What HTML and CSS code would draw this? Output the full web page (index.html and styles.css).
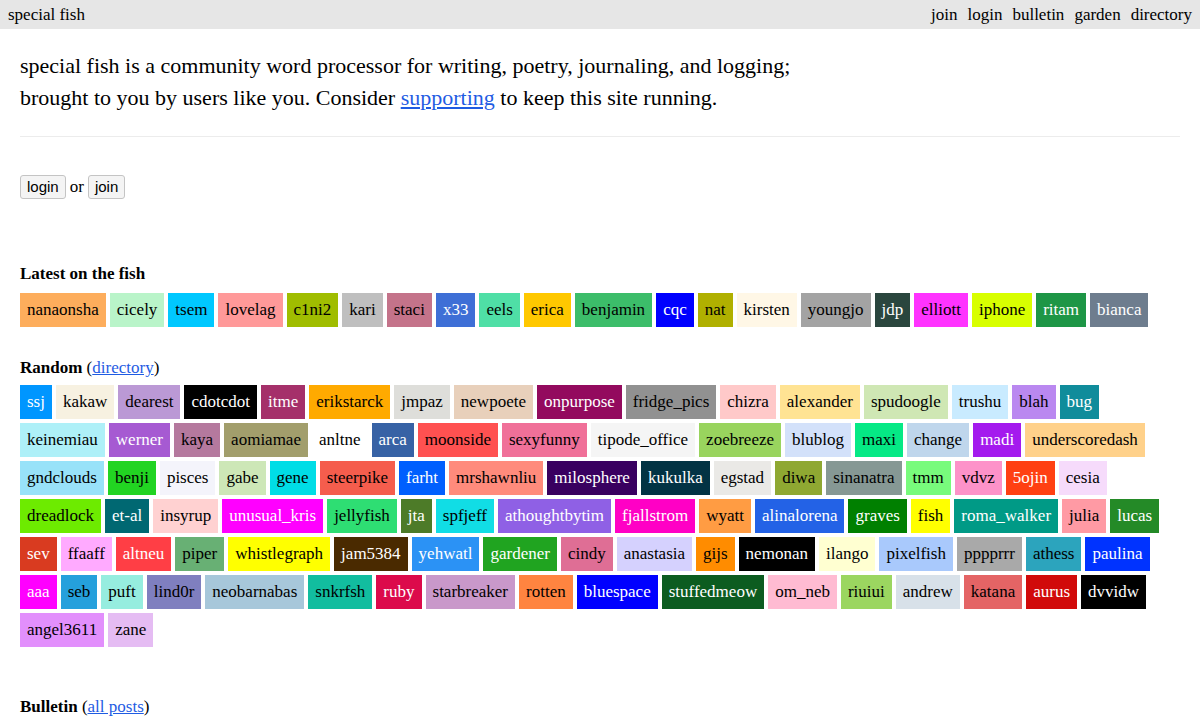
FILE: index.html
```html
<!DOCTYPE html>
<html>
<head>
<meta charset="utf-8">
<title>special fish</title>
<link rel="stylesheet" href="styles.css">
</head>
<body>
<header class="topbar">
  <a class="brand" href="#">special fish</a>
  <nav class="nav">
    <a href="#">join</a>
    <a href="#">login</a>
    <a href="#">bulletin</a>
    <a href="#">garden</a>
    <a href="#">directory</a>
  </nav>
</header>
<main class="main">
  <p class="intro">special fish is a community word processor for writing, poetry, journaling, and logging;<br>brought to you by users like you. Consider <a class="link" href="#">supporting</a> to keep this site running.</p>
  <hr class="rule">
  <div class="auth">
    <button class="btn">login</button> <span>or</span> <button class="btn">join</button>
  </div>

  <section class="section latest">
    <h2 class="heading">Latest on the fish</h2>
    <div class="tags">
      <a class="tag" style="background:#fdad5c">nanaonsha</a>
      <a class="tag" style="background:#b9f4c9">cicely</a>
      <a class="tag" style="background:#00c8ff">tsem</a>
      <a class="tag" style="background:#ff9999">lovelag</a>
      <a class="tag" style="background:#a0bd00">c1ni2</a>
      <a class="tag" style="background:#bfbfbf">kari</a>
      <a class="tag" style="background:#c4738a">staci</a>
      <a class="tag light" style="background:#3e6fd6">x33</a>
      <a class="tag" style="background:#4fdfa6">eels</a>
      <a class="tag" style="background:#ffc800">erica</a>
      <a class="tag" style="background:#3cbd6a">benjamin</a>
      <a class="tag light" style="background:#0000ff">cqc</a>
      <a class="tag" style="background:#b0b000">nat</a>
      <a class="tag" style="background:#fff7e6">kirsten</a>
      <a class="tag" style="background:#a3a3a3">youngjo</a>
      <a class="tag light" style="background:#2a463e">jdp</a>
      <a class="tag" style="background:#ff33ff">elliott</a>
      <a class="tag" style="background:#d8ff00">iphone</a>
      <a class="tag light" style="background:#1e9646">ritam</a>
      <a class="tag light" style="background:#6e7d8e">bianca</a>
    </div>
  </section>

  <section class="section random">
    <h2 class="heading">Random <span class="paren">(<a class="link" href="#">directory</a>)</span></h2>
    <div class="tags">
      <a class="tag light" style="background:#0096ff">ssj</a>
      <a class="tag" style="background:#f7f1e1">kakaw</a>
      <a class="tag" style="background:#bb99d5">dearest</a>
      <a class="tag light" style="background:#000000">cdotcdot</a>
      <a class="tag light" style="background:#a5306a">itme</a>
      <a class="tag" style="background:#ffaa00">erikstarck</a>
      <a class="tag" style="background:#dededa">jmpaz</a>
      <a class="tag" style="background:#e8d0bb">newpoete</a>
      <a class="tag light" style="background:#930a5e">onpurpose</a>
      <a class="tag" style="background:#919191">fridge_pics</a>
      <a class="tag" style="background:#ffc9c9">chizra</a>
      <a class="tag" style="background:#ffe393">alexander</a>
      <a class="tag" style="background:#cfe7b4">spudoogle</a>
      <a class="tag" style="background:#c9ebff">trushu</a>
      <a class="tag" style="background:#ba88f0">blah</a>
      <a class="tag light" style="background:#108c9b">bug</a>

      <a class="tag" style="background:#aef0f8">keinemiau</a>
      <a class="tag light" style="background:#a65ad2">werner</a>
      <a class="tag" style="background:#b5799e">kaya</a>
      <a class="tag" style="background:#a29e6c">aomiamae</a>
      <a class="tag" style="background:#ffffff">anltne</a>
      <a class="tag light" style="background:#3762a5">arca</a>
      <a class="tag" style="background:#ff5151">moonside</a>
      <a class="tag" style="background:#f07099">sexyfunny</a>
      <a class="tag" style="background:#f5f5f5">tipode_office</a>
      <a class="tag" style="background:#99d45e">zoebreeze</a>
      <a class="tag" style="background:#d3e1fa">blublog</a>
      <a class="tag" style="background:#05e985">maxi</a>
      <a class="tag" style="background:#bfd6ec">change</a>
      <a class="tag light" style="background:#a41aee">madi</a>
      <a class="tag" style="background:#ffd18a">underscoredash</a>

      <a class="tag" style="background:#98e2f9">gndclouds</a>
      <a class="tag" style="background:#22d422">benji</a>
      <a class="tag" style="background:#f4f4fb">pisces</a>
      <a class="tag" style="background:#cde7b7">gabe</a>
      <a class="tag" style="background:#00dde6">gene</a>
      <a class="tag" style="background:#f55d4d">steerpike</a>
      <a class="tag light" style="background:#005ffe">farht</a>
      <a class="tag" style="background:#ff8b7c">mrshawnliu</a>
      <a class="tag light" style="background:#390060">milosphere</a>
      <a class="tag light" style="background:#023344">kukulka</a>
      <a class="tag" style="background:#eae9e6">egstad</a>
      <a class="tag" style="background:#8fa832">diwa</a>
      <a class="tag" style="background:#869894">sinanatra</a>
      <a class="tag" style="background:#78fb7c">tmm</a>
      <a class="tag" style="background:#fd92c9">vdvz</a>
      <a class="tag light" style="background:#ff4012">5ojin</a>
      <a class="tag" style="background:#f6dbfb">cesia</a>

      <a class="tag" style="background:#6deb00">dreadlock</a>
      <a class="tag light" style="background:#006872">et-al</a>
      <a class="tag" style="background:#ffd1d1">insyrup</a>
      <a class="tag light" style="background:#ff00ff">unusual_kris</a>
      <a class="tag" style="background:#2ede73">jellyfish</a>
      <a class="tag light" style="background:#4d7b28">jta</a>
      <a class="tag" style="background:#11dde5">spfjeff</a>
      <a class="tag light" style="background:#8f60e5">athoughtbytim</a>
      <a class="tag light" style="background:#ff00c5">fjallstrom</a>
      <a class="tag" style="background:#ff9c43">wyatt</a>
      <a class="tag light" style="background:#2362e6">alinalorena</a>
      <a class="tag light" style="background:#008000">graves</a>
      <a class="tag" style="background:#ffff00">fish</a>
      <a class="tag light" style="background:#009a86">roma_walker</a>
      <a class="tag" style="background:#ff9aa4">julia</a>
      <a class="tag light" style="background:#248a27">lucas</a>

      <a class="tag light" style="background:#d93b20">sev</a>
      <a class="tag" style="background:#ffaaff">ffaaff</a>
      <a class="tag light" style="background:#ff3e45">altneu</a>
      <a class="tag" style="background:#68b074">piper</a>
      <a class="tag" style="background:#ffff00">whistlegraph</a>
      <a class="tag light" style="background:#4a2a00">jam5384</a>
      <a class="tag light" style="background:#2b92f5">yehwatl</a>
      <a class="tag light" style="background:#20a420">gardener</a>
      <a class="tag" style="background:#df6e95">cindy</a>
      <a class="tag" style="background:#d5d1fe">anastasia</a>
      <a class="tag" style="background:#ff8c00">gijs</a>
      <a class="tag light" style="background:#000000">nemonan</a>
      <a class="tag" style="background:#ffffd1">ilango</a>
      <a class="tag" style="background:#a9c9fc">pixelfish</a>
      <a class="tag" style="background:#a9a9a9">pppprrr</a>
      <a class="tag" style="background:#2ca4bd">athess</a>
      <a class="tag light" style="background:#0033ff">paulina</a>

      <a class="tag light" style="background:#ff00ff">aaa</a>
      <a class="tag" style="background:#25a0dc">seb</a>
      <a class="tag" style="background:#96eddf">puft</a>
      <a class="tag" style="background:#7f7fbf">lind0r</a>
      <a class="tag" style="background:#a7c7da">neobarnabas</a>
      <a class="tag" style="background:#12bd9f">snkrfsh</a>
      <a class="tag light" style="background:#dc0a4b">ruby</a>
      <a class="tag" style="background:#c998ca">starbreaker</a>
      <a class="tag" style="background:#ff8440">rotten</a>
      <a class="tag light" style="background:#0000ff">bluespace</a>
      <a class="tag light" style="background:#0c5c20">stuffedmeow</a>
      <a class="tag" style="background:#ffbbd2">om_neb</a>
      <a class="tag" style="background:#9bd660">riuiui</a>
      <a class="tag" style="background:#d8e1e9">andrew</a>
      <a class="tag" style="background:#e46465">katana</a>
      <a class="tag light" style="background:#d10a0a">aurus</a>
      <a class="tag light" style="background:#000000">dvvidw</a>

      <a class="tag" style="background:#e28ffc">angel3611</a>
      <a class="tag" style="background:#e5bcf3">zane</a>
    </div>
  </section>

  <section class="section bulletin">
    <h2 class="heading">Bulletin <span class="paren">(<a class="link" href="#">all posts</a>)</span></h2>
  </section>
</main>
</body>
</html>
```

FILE: styles.css
```css
html, body {
  margin: 0;
  padding: 0;
  background: #ffffff;
  color: #000000;
  font-family: "Liberation Serif", "Times New Roman", serif;
  font-size: 17px;
}

a {
  color: inherit;
  text-decoration: none;
}

.topbar {
  display: flex;
  justify-content: space-between;
  align-items: center;
  height: 29px;
  padding: 0 8px;
  background: #e6e6e6;
}

.brand {
  font-size: 17px;
}

.nav {
  display: flex;
  gap: 10px;
}

.main {
  padding: 0 20px;
}

.intro {
  margin: 21px 0 0;
  font-size: 22px;
  line-height: 32px;
}

.link {
  color: #1f5ce3;
  text-decoration: underline;
}

.rule {
  margin: 22px 0 0;
  border: 0;
  border-top: 1px solid #ececec;
  height: 0;
}

.auth {
  margin-top: 38px;
  display: flex;
  align-items: center;
  gap: 4px;
  font-size: 17px;
}

.btn {
  font-family: "Liberation Sans", Arial, sans-serif;
  font-size: 15px;
  padding: 3px 6px;
  background: #f4f4f4;
  border: 1px solid #c4c4c4;
  border-radius: 3px;
  color: #000;
  line-height: 16px;
}

.section {
  margin-top: 65px;
}

.random {
  margin-top: 31px;
}

.random .heading {
  margin-bottom: 8px;
}

.bulletin {
  margin-top: 50px;
}

.heading {
  margin: 0 0 10px;
  font-size: 17px;
  font-weight: bold;
  line-height: 19px;
}

.paren {
  font-weight: normal;
}

.tags {
  display: flex;
  flex-wrap: wrap;
  gap: 4px 4px;
}

.tag {
  display: block;
  padding: 8px 7px;
  line-height: 18px;
  color: #000;
}

.tag.light {
  color: #fff;
}
```
